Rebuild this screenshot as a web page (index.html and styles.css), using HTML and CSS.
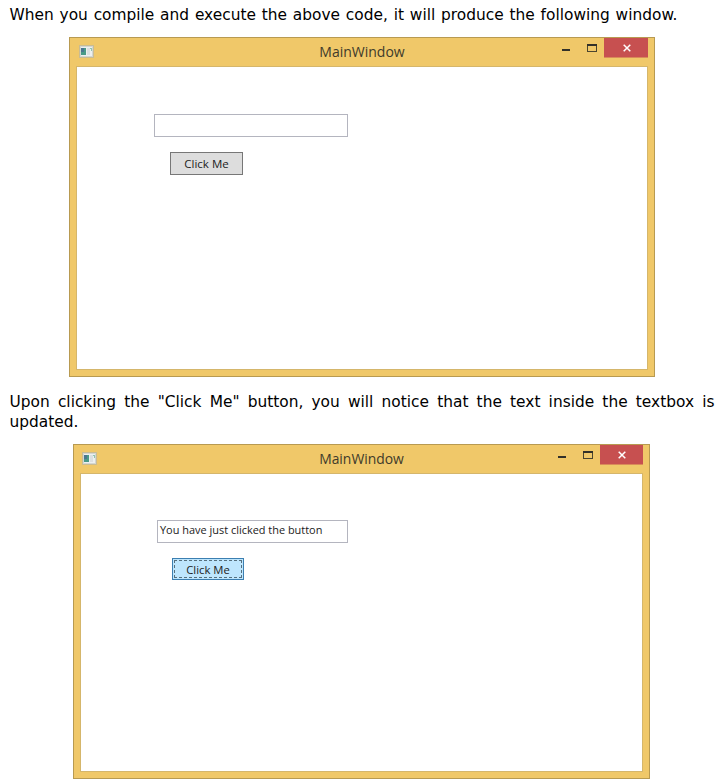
FILE: index.html
```html
<!DOCTYPE html>
<html lang="en">
<head>
<meta charset="utf-8">
<title>MainWindow</title>
<link rel="stylesheet" href="styles.css">
</head>
<body>
<main class="page">
  <p class="text intro">When you compile and execute the above code, it will produce the following window.</p>

  <section class="window window-first">
    <header class="titlebar">
      <svg class="app-icon" viewBox="0 0 15 13"><rect x=".5" y=".5" width="14" height="12" fill="#e4e7e4" stroke="#c9bc93"/><rect x="1.5" y="1.5" width="12" height="10" fill="#edf0ef" stroke="#d3d6d2"/><rect x="2" y="3" width="5" height="7" fill="#4a9a88"/><path d="M2 3h3v4H2z" fill="#4b7790"/><path d="M8 3h3v7H8z" fill="#dce0e1"/><path d="M11 3h2v3h-1V4h-1z" fill="#91c4b0"/></svg>
      <h2 class="title">MainWindow</h2>
      <div class="controls">
        <svg class="minmax" viewBox="0 0 43 20"><path d="M1 11h8v2H1z" fill="#333129"/><path d="M26 6h10v8H26zM27 8v5h8V8z" fill="#4b452f" fill-rule="evenodd"/><path d="M26 6h10v2H26z" fill="#333129"/></svg>
        <div class="close"><svg class="cross" viewBox="0 0 8 8"><path d="M.7.7l6.6 6.6M7.3.7L.7 7.3" stroke="#fff" stroke-width="1.5"/></svg></div>
      </div>
    </header>
    <div class="client">
      <div class="field"></div>
      <div class="button">Click Me</div>
    </div>
  </section>

  <div class="text outro">
    <p class="full">Upon clicking the "Click Me" button, you will notice that the text inside the textbox is</p>
    <p class="last">updated.</p>
  </div>

  <section class="window window-second">
    <header class="titlebar">
      <svg class="app-icon" viewBox="0 0 15 13"><rect x=".5" y=".5" width="14" height="12" fill="#e4e7e4" stroke="#c9bc93"/><rect x="1.5" y="1.5" width="12" height="10" fill="#edf0ef" stroke="#d3d6d2"/><rect x="2" y="3" width="5" height="7" fill="#4a9a88"/><path d="M2 3h3v4H2z" fill="#4b7790"/><path d="M8 3h3v7H8z" fill="#dce0e1"/><path d="M11 3h2v3h-1V4h-1z" fill="#91c4b0"/></svg>
      <h2 class="title">MainWindow</h2>
      <div class="controls">
        <svg class="minmax" viewBox="0 0 43 20"><path d="M1 11h8v2H1z" fill="#333129"/><path d="M26 6h10v8H26zM27 8v5h8V8z" fill="#4b452f" fill-rule="evenodd"/><path d="M26 6h10v2H26z" fill="#333129"/></svg>
        <div class="close"><svg class="cross" viewBox="0 0 8 8"><path d="M.7.7l6.6 6.6M7.3.7L.7 7.3" stroke="#fff" stroke-width="1.5"/></svg></div>
      </div>
    </header>
    <div class="client">
      <div class="field">You have just clicked the button</div>
      <div class="button focused"><span class="focus-ring">Click Me</span></div>
    </div>
  </section>
</main>
</body>
</html>
```
FILE: styles.css
```css
* { box-sizing: border-box; }
body { margin: 0; background: #fff; overflow: hidden; }
.page { width: 720px; height: 780px; padding: 5px 0 0; }
.text {
  margin: 0 0 0 9.5px;
  font: 15.4px/20px "DejaVu Sans", sans-serif;
  color: #000;
  white-space: nowrap;
}
.text p { margin: 0; }
.intro { width: 668px; height: 32px; text-align-last: justify; }
.outro { width: 705px; height: 52px; margin-top: 15px; }
.full { text-align-last: justify; }

.window {
  display: flex;
  flex-direction: column;
  background: #f0c869;
  border: 1px solid #b89a51;
  font-family: "Open Sans", sans-serif;
}
.window-first { width: 586px; height: 340px; margin-left: 69px; padding: 0 6px 6px; }
.window-second { width: 577px; height: 335px; margin-left: 73px; padding: 0 6px 6px; }

.titlebar {
  display: grid;
  grid-template-columns: 1fr auto 1fr;
  height: 28px;
  flex: none;
}
.app-icon { width: 15px; height: 13px; margin: 7px 0 0 3px; }
.window-second .app-icon { margin-left: 2px; }
.title { margin: 4px 0 0; font-size: 14px; line-height: 20px; font-weight: 400; color: #403b2b; }
.window-second .title { font-size: 13.9px; }
.controls { display: flex; justify-content: flex-end; }
.minmax { width: 43px; height: 20px; flex: none; }
.close {
  display: flex;
  align-items: center;
  justify-content: center;
  width: 44px;
  height: 20px;
  padding-left: 2px;
  background: #c75050;
  border-bottom: 1px solid #d98a59;
}
.window-second .close { width: 43px; padding-left: 1px; }
.cross { width: 8px; height: 8px; }

.client { flex: 1; background: #fff; border: 1px solid #d5b66b; }
.field {
  border: 1px solid #b4b5bf;
  font-size: 10.95px;
  line-height: 18px;
  color: #222;
  padding-left: 2px;
  white-space: nowrap;
}
.button {
  border: 1px solid #777;
  background: #ddd;
  font-size: 11.5px;
  line-height: 21px;
  text-align: center;
  color: #222;
}
.window-first .field { width: 194px; height: 23px; margin: 47px 0 0 77px; }
.window-first .button { width: 73px; height: 23px; margin: 15px 0 0 93px; }
.window-second .field { width: 191px; height: 23px; margin: 46px 0 0 76px; }
.window-second .button { width: 72px; height: 22px; margin: 15px 0 0 91px; }
.window-second .focused { padding: 1px; background: #bee6fd; border-color: #3c7fb1; font-size: 11.3px; }
.focus-ring { display: block; height: 18px; line-height: 17px; border: 1px dashed #56707e; }
```
